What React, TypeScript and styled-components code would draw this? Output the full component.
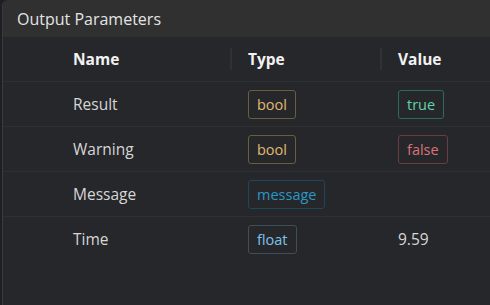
import { FC } from "react";
import styled, { createGlobalStyle } from "styled-components";

const GlobalStyle = createGlobalStyle`
  html, body {
    margin: 0;
    padding: 0;
    height: 100%;
    background: #1e1f22;
  }
  body {
    font-family: "Open Sans", "Noto Sans", "Liberation Sans", sans-serif;
    overflow: hidden;
  }
`;

const Panel = styled.section`
  margin-left: 2px;
  height: 305px;
  background: #26272b;
  border-left: 1px solid #3a3b3f;
  border-top-left-radius: 6px;
  overflow: hidden;
`;

const TitleBar = styled.header`
  height: 37px;
  display: flex;
  align-items: center;
  padding-left: 14px;
  background: #303030;
  color: #e4e4e4;
  font-size: 16px;
`;

const Grid = styled.div`
  display: grid;
  grid-template-columns: 54px 175px 150px 1fr;
`;

const HeadCell = styled.div<{ $divider?: boolean }>`
  position: relative;
  height: 44px;
  display: flex;
  align-items: center;
  padding-left: 16px;
  color: #f2f2f2;
  font-weight: 700;
  font-size: 15.5px;
  border-bottom: 1px solid #2f3034;

  ${({ $divider }) =>
    $divider &&
    `
    &::after {
      content: "";
      position: absolute;
      right: 0;
      top: 11px;
      bottom: 11px;
      width: 2px;
      background: #303135;
    }
  `}
`;

const Cell = styled.div<{ $last?: boolean }>`
  height: 44px;
  display: flex;
  align-items: center;
  padding-left: 16px;
  color: #d6d6d6;
  font-size: 15.5px;
  border-bottom: 1px solid ${({ $last }) => ($last ? "transparent" : "#2f3034")};
`;

const Spacer = styled(Cell)`
  padding-left: 0;
`;

type Tone = "yellow" | "green" | "red" | "cyan" | "blue";

const tones: Record<Tone, { fg: string; border: string }> = {
  yellow: { fg: "#e0b96e", border: "#6b5c3f" },
  green: { fg: "#5fd6a8", border: "#2f6b58" },
  red: { fg: "#dd7278", border: "#6a3d3e" },
  cyan: { fg: "#2a98c6", border: "#1e4759" },
  blue: { fg: "#7cc3ea", border: "#3e4e5b" },
};

const Badge = styled.span<{ $tone: Tone }>`
  display: inline-flex;
  align-items: center;
  height: 27px;
  padding: 0 8px;
  border-radius: 3px;
  font-size: 14.5px;
  color: ${({ $tone }) => tones[$tone].fg};
  border: 1px solid ${({ $tone }) => tones[$tone].border};
`;

interface Param {
  name: string;
  type: string;
  typeTone: Tone;
  value?: string;
  valueTone?: Tone;
}

const params: Param[] = [
  { name: "Result", type: "bool", typeTone: "yellow", value: "true", valueTone: "green" },
  { name: "Warning", type: "bool", typeTone: "yellow", value: "false", valueTone: "red" },
  { name: "Message", type: "message", typeTone: "cyan" },
  { name: "Time", type: "float", typeTone: "blue", value: "9.59" },
];

const App: FC = () => {
  return (
    <>
      <GlobalStyle />
      <Panel>
        <TitleBar>Output Parameters</TitleBar>
        <Grid>
          <HeadCell />
          <HeadCell $divider>Name</HeadCell>
          <HeadCell $divider>Type</HeadCell>
          <HeadCell>Value</HeadCell>
          {params.map((p, i) => {
            const last = i === params.length - 1;
            return [
              <Spacer key={`${p.name}-s`} $last={last} />,
              <Cell key={`${p.name}-n`} $last={last}>
                {p.name}
              </Cell>,
              <Cell key={`${p.name}-t`} $last={last}>
                <Badge $tone={p.typeTone}>{p.type}</Badge>
              </Cell>,
              <Cell key={`${p.name}-v`} $last={last}>
                {p.value && p.valueTone ? (
                  <Badge $tone={p.valueTone}>{p.value}</Badge>
                ) : (
                  p.value
                )}
              </Cell>,
            ];
          })}
        </Grid>
      </Panel>
    </>
  );
};

export default App;
